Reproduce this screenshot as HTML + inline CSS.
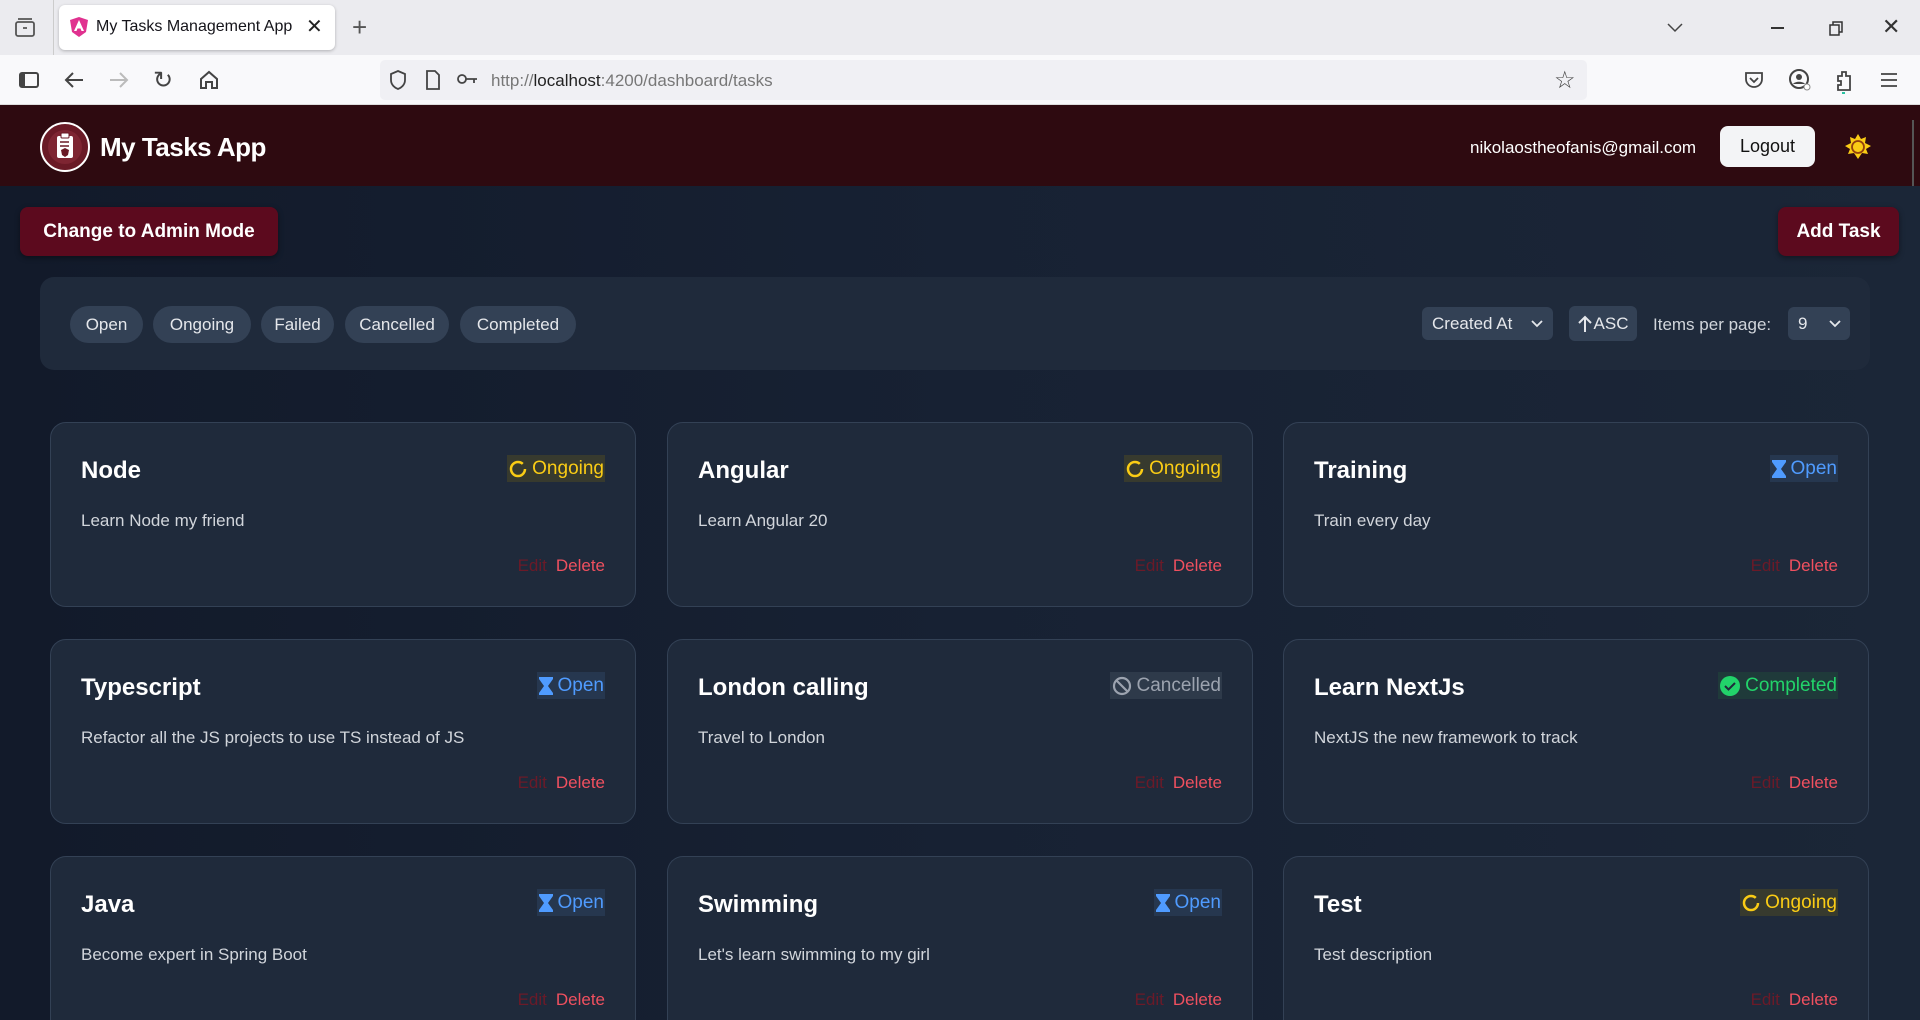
<!DOCTYPE html>
<html style="overflow:hidden;height:1020px"><head><meta charset="utf-8"><style>
*{box-sizing:border-box;margin:0;padding:0}
body{width:1920px;height:1020px;overflow:hidden;font-family:"Liberation Sans",sans-serif;background:#151d2c;position:relative}
.a{position:absolute}
.tabbar{left:0;top:0;width:1920px;height:55px;background:#ebebef}
.tab{left:59px;top:5px;width:276px;height:45px;background:#fff;border-radius:6px;box-shadow:0 1px 3px rgba(0,0,0,.25)}
.toolbar{left:0;top:55px;width:1920px;height:50px;background:#f9f9fb;border-bottom:1px solid #ddd}
.url{left:380px;top:60px;width:1207px;height:40px;background:#f0f0f4;border-radius:5px}
.hdr{left:0;top:105px;width:1920px;height:81px;background:#2e0a10}
.main{left:0;top:186px;width:1920px;height:834px;background:linear-gradient(90deg,#121a2a 0%,#172133 50%,#1b2637 100%)}
.btn{background:#5c0a1e;color:#fff;font-weight:bold;font-size:19px;border-radius:8px;display:flex;align-items:center;justify-content:center;box-shadow:0 2px 6px rgba(0,0,0,.4)}
.panel{left:40px;top:277px;width:1830px;height:93px;background:#1f2a3b;border-radius:14px}
.chip{top:306px;height:37px;background:#334155;color:#e5e7eb;border-radius:19px;font-size:17px;display:flex;align-items:center;justify-content:center}
.sel{background:#334155;color:#e5e7eb;border-radius:6px;font-size:17px;display:flex;align-items:center}
.card{width:586px;height:185px;background:#1f2a3b;border:1px solid #334155;border-radius:16px;overflow:hidden}
.card h3{position:absolute;left:30px;top:34px;color:#fff;font-size:24px;font-weight:bold}
.card p{position:absolute;left:30px;top:88px;color:#d1d5db;font-size:17px}
.card .act{position:absolute;right:30px;top:133px;font-size:17px}
.edit{color:#6b1a28;margin-right:9px}.del{color:#f0505f}
.bd{position:absolute;right:30px;top:32px;height:27px;font-size:19px;display:flex;align-items:center;padding:0 1px}
.on{color:#facc15;background:#373a2e}.op{color:#4f9bff;background:#26374f}.ca{color:#9ca3af;background:#2e3a4a}.co{color:#22d36a;background:#1f3a3a}
.bd svg{margin-right:4px}
</style></head><body>
<div class="a tabbar"></div>
<svg class="a" style="left:14px;top:18px" width="22" height="20" viewBox="0 0 22 20"><rect x="2" y="4" width="18" height="14" rx="2" fill="none" stroke="#555" stroke-width="1.8"/><path d="M4 1h14M9 10h4" stroke="#555" stroke-width="1.8"/></svg>
<div class="a" style="left:53px;top:0;width:1px;height:55px;background:#ccc"></div>
<div class="a tab"></div>
<svg class="a" style="left:69px;top:16px" width="20" height="22" viewBox="0 0 20 22"><path d="M10 1L1 4l2 12 7 5 7-5 2-12z" fill="#e0318f"/><path d="M10 4l-5 11h2.5l1-2.5h3l1 2.5H15z" fill="#fff"/></svg>
<div class="a" style="left:96px;top:18px;font-size:16px;color:#15141a">My Tasks Management App</div>
<div class="a" style="left:306px;top:14px;font-size:20px;color:#222">✕</div>
<div class="a" style="left:352px;top:12px;font-size:26px;color:#555;font-weight:300">+</div>
<svg class="a" style="left:1666px;top:22px" width="18" height="12"><path d="M2 2l7 7 7-7" fill="none" stroke="#444" stroke-width="1.5"/></svg>
<div class="a" style="left:1771px;top:27px;width:13px;height:1.5px;background:#333"></div>
<svg class="a" style="left:1828px;top:20px" width="16" height="16"><rect x="2" y="5" width="9" height="10" fill="none" stroke="#333" stroke-width="1.5"/><path d="M5 5V2h9v10h-3" fill="none" stroke="#333" stroke-width="1.5"/></svg>
<div class="a" style="left:1882px;top:14px;font-size:22px;color:#333">✕</div>
<div class="a toolbar"></div>
<svg class="a" style="left:18px;top:71px" width="24" height="20"><rect x="2" y="2" width="18" height="14" rx="2" fill="none" stroke="#444" stroke-width="2"/><rect x="2" y="2" width="5" height="14" fill="#444"/></svg>
<svg class="a" style="left:63px;top:70px" width="22" height="20"><path d="M20 10H3M10 3L3 10l7 7" fill="none" stroke="#444" stroke-width="2"/></svg>
<svg class="a" style="left:108px;top:70px" width="22" height="20"><path d="M2 10h17M12 3l7 7-7 7" fill="none" stroke="#bbb" stroke-width="2"/></svg>
<div class="a" style="left:153px;top:66px;font-size:24px;color:#444">↻</div>
<svg class="a" style="left:198px;top:69px" width="22" height="22"><path d="M3 10L11 3l8 7v9h-5v-6h-6v6H3z" fill="none" stroke="#444" stroke-width="2"/></svg>
<div class="a url"></div>
<svg class="a" style="left:388px;top:69px" width="20" height="22"><path d="M10 2l7 3v6c0 5-4 8-7 9-3-1-7-4-7-9V5z" fill="none" stroke="#444" stroke-width="1.8"/></svg>
<svg class="a" style="left:424px;top:69px" width="18" height="22"><path d="M3 2h8l4 4v14H3z" fill="none" stroke="#444" stroke-width="1.8"/></svg>
<svg class="a" style="left:457px;top:72px" width="22" height="14"><circle cx="5" cy="7" r="4" fill="none" stroke="#444" stroke-width="1.8"/><path d="M9 7h11M17 7v4" stroke="#444" stroke-width="1.8"/></svg>
<div class="a" style="left:491px;top:71px;font-size:17px;color:#777">http://<span style="color:#222">localhost</span>:4200/dashboard/tasks</div>
<div class="a" style="left:1554px;top:66px;font-size:24px;color:#444">☆</div>
<svg class="a" style="left:1744px;top:70px" width="20" height="20"><path d="M2 3h16v6c0 5-4 8-8 8S2 14 2 9z" fill="none" stroke="#444" stroke-width="1.8"/><path d="M6 8l4 4 4-4" fill="none" stroke="#444" stroke-width="1.8"/></svg>
<svg class="a" style="left:1788px;top:68px" width="24" height="24"><circle cx="11" cy="11" r="9" fill="none" stroke="#444" stroke-width="2"/><circle cx="11" cy="9" r="3" fill="#444"/><path d="M5 16c2-3 10-3 12 0" fill="#444"/><circle cx="19" cy="19" r="3" fill="#fff" stroke="#888"/></svg>
<svg class="a" style="left:1834px;top:68px" width="20" height="26"><path d="M4 8h4V4h4v4h4v14H4v-5h3v-4H4z" fill="none" stroke="#444" stroke-width="1.8"/><rect x="8" y="24" width="3" height="2" fill="#2ac3a2"/></svg>
<svg class="a" style="left:1880px;top:72px" width="18" height="16"><path d="M1 2h16M1 8h16M1 14h16" stroke="#444" stroke-width="1.8"/></svg>

<div class="a hdr"></div>
<div class="a" style="left:40px;top:122px;width:50px;height:50px;border-radius:50%;border:2px solid #fff;background:#6a1a26"></div>
<div class="a" style="left:48px;top:130px;width:34px;height:34px;border-radius:50%;background:#7e2532"></div>
<svg class="a" style="left:55px;top:132px" width="20" height="28"><rect x="2" y="4" width="16" height="22" rx="2" fill="#fff"/><rect x="6" y="1" width="8" height="5" rx="1" fill="#fff" stroke="#6a1a26"/><path d="M5 10h9M5 14h9" stroke="#6a1a26" stroke-width="1.5"/><path d="M10 16l-4 2 1 5 3 2 3-2 1-5z" fill="#6a1a26"/></svg>
<div class="a" style="left:100px;top:132px;font-size:26px;color:#fff;font-weight:bold;letter-spacing:-0.5px">My Tasks App</div>
<div class="a" style="left:1470px;top:138px;font-size:17px;color:#fff">nikolaostheofanis@gmail.com</div>
<div class="a" style="left:1720px;top:126px;width:95px;height:41px;background:#f3f4f6;border-radius:8px;font-size:18px;color:#111;display:flex;align-items:center;justify-content:center">Logout</div>
<svg class="a" style="left:1844px;top:133px" width="28" height="28" viewBox="0 0 28 28"><path d="M14 1l3 5 5-2-1 6 6 3-5 3 2 5-6-1-4 6-4-6-6 1 2-5-5-3 6-3-1-6 5 2z" fill="#facc15"/><circle cx="14" cy="14" r="6" fill="none" stroke="#92400e" stroke-width="1.8"/></svg>
<div class="a" style="left:1912px;top:120px;width:2px;height:720px;background:#555"></div>

<div class="a main"></div>
<div class="a btn" style="left:20px;top:207px;width:258px;height:49px">Change to Admin Mode</div>
<div class="a btn" style="left:1778px;top:207px;width:121px;height:49px">Add Task</div>
<div class="a panel"></div>
<div class="a chip" style="left:70px;width:73px">Open</div>
<div class="a chip" style="left:153px;width:98px">Ongoing</div>
<div class="a chip" style="left:261px;width:73px">Failed</div>
<div class="a chip" style="left:345px;width:104px">Cancelled</div>
<div class="a chip" style="left:460px;width:116px">Completed</div>
<div class="a sel" style="left:1422px;top:307px;width:131px;height:33px;padding-left:10px">Created At<svg style="position:absolute;right:10px" width="12" height="8"><path d="M1 1l5 5 5-5" fill="none" stroke="#e5e7eb" stroke-width="1.8"/></svg></div>
<div class="a sel" style="left:1569px;top:306px;width:68px;height:35px;justify-content:center"><svg width="14" height="18" style="margin-right:2px"><path d="M7 17V2M1 8l6-6 6 6" fill="none" stroke="#e5e7eb" stroke-width="2"/></svg>ASC</div>
<div class="a" style="left:1653px;top:315px;font-size:17px;color:#d1d5db">Items per page:</div>
<div class="a sel" style="left:1788px;top:307px;width:62px;height:33px;padding-left:10px">9<svg style="position:absolute;right:9px" width="12" height="8"><path d="M1 1l5 5 5-5" fill="none" stroke="#e5e7eb" stroke-width="1.8"/></svg></div>

<div class="a card" style="left:50px;top:422px"><h3>Node</h3><div class="bd on"><svg width="20" height="20"><circle cx="10" cy="10" r="7" fill="none" stroke="#facc15" stroke-width="2.5" stroke-dasharray="38 6"/></svg>Ongoing</div><p>Learn Node my friend</p><div class="act"><span class="edit">Edit</span><span class="del">Delete</span></div></div>
<div class="a card" style="left:667px;top:422px"><h3>Angular</h3><div class="bd on"><svg width="20" height="20"><circle cx="10" cy="10" r="7" fill="none" stroke="#facc15" stroke-width="2.5" stroke-dasharray="38 6"/></svg>Ongoing</div><p>Learn Angular 20</p><div class="act"><span class="edit">Edit</span><span class="del">Delete</span></div></div>
<div class="a card" style="left:1283px;top:422px"><h3>Training</h3><div class="bd op"><svg width="16" height="20"><path d="M1 1h14v2l-5 7 5 7v2H1v-2l5-7-5-7z" fill="#4f9bff"/></svg>Open</div><p>Train every day</p><div class="act"><span class="edit">Edit</span><span class="del">Delete</span></div></div>

<div class="a card" style="left:50px;top:639px"><h3>Typescript</h3><div class="bd op"><svg width="16" height="20"><path d="M1 1h14v2l-5 7 5 7v2H1v-2l5-7-5-7z" fill="#4f9bff"/></svg>Open</div><p>Refactor all the JS projects to use TS instead of JS</p><div class="act"><span class="edit">Edit</span><span class="del">Delete</span></div></div>
<div class="a card" style="left:667px;top:639px"><h3>London calling</h3><div class="bd ca"><svg width="22" height="22"><circle cx="11" cy="11" r="8" fill="none" stroke="#9ca3af" stroke-width="2.2"/><path d="M5.5 5.5l11 11" stroke="#9ca3af" stroke-width="2.2"/></svg>Cancelled</div><p>Travel to London</p><div class="act"><span class="edit">Edit</span><span class="del">Delete</span></div></div>
<div class="a card" style="left:1283px;top:639px"><h3>Learn NextJs</h3><div class="bd co"><svg width="22" height="22"><circle cx="11" cy="11" r="10" fill="#22d36a"/><path d="M6 11l3.5 3.5L16 8" fill="none" stroke="#1f2a3b" stroke-width="2"/></svg>Completed</div><p>NextJS the new framework to track</p><div class="act"><span class="edit">Edit</span><span class="del">Delete</span></div></div>

<div class="a card" style="left:50px;top:856px;height:164px;border-bottom:none;border-radius:16px 16px 0 0"><h3>Java</h3><div class="bd op"><svg width="16" height="20"><path d="M1 1h14v2l-5 7 5 7v2H1v-2l5-7-5-7z" fill="#4f9bff"/></svg>Open</div><p>Become expert in Spring Boot</p><div class="act"><span class="edit">Edit</span><span class="del">Delete</span></div></div>
<div class="a card" style="left:667px;top:856px;height:164px;border-bottom:none;border-radius:16px 16px 0 0"><h3>Swimming</h3><div class="bd op"><svg width="16" height="20"><path d="M1 1h14v2l-5 7 5 7v2H1v-2l5-7-5-7z" fill="#4f9bff"/></svg>Open</div><p>Let's learn swimming to my girl</p><div class="act"><span class="edit">Edit</span><span class="del">Delete</span></div></div>
<div class="a card" style="left:1283px;top:856px;height:164px;border-bottom:none;border-radius:16px 16px 0 0"><h3>Test</h3><div class="bd on"><svg width="20" height="20"><circle cx="10" cy="10" r="7" fill="none" stroke="#facc15" stroke-width="2.5" stroke-dasharray="38 6"/></svg>Ongoing</div><p>Test description</p><div class="act"><span class="edit">Edit</span><span class="del">Delete</span></div></div>
</body></html>
